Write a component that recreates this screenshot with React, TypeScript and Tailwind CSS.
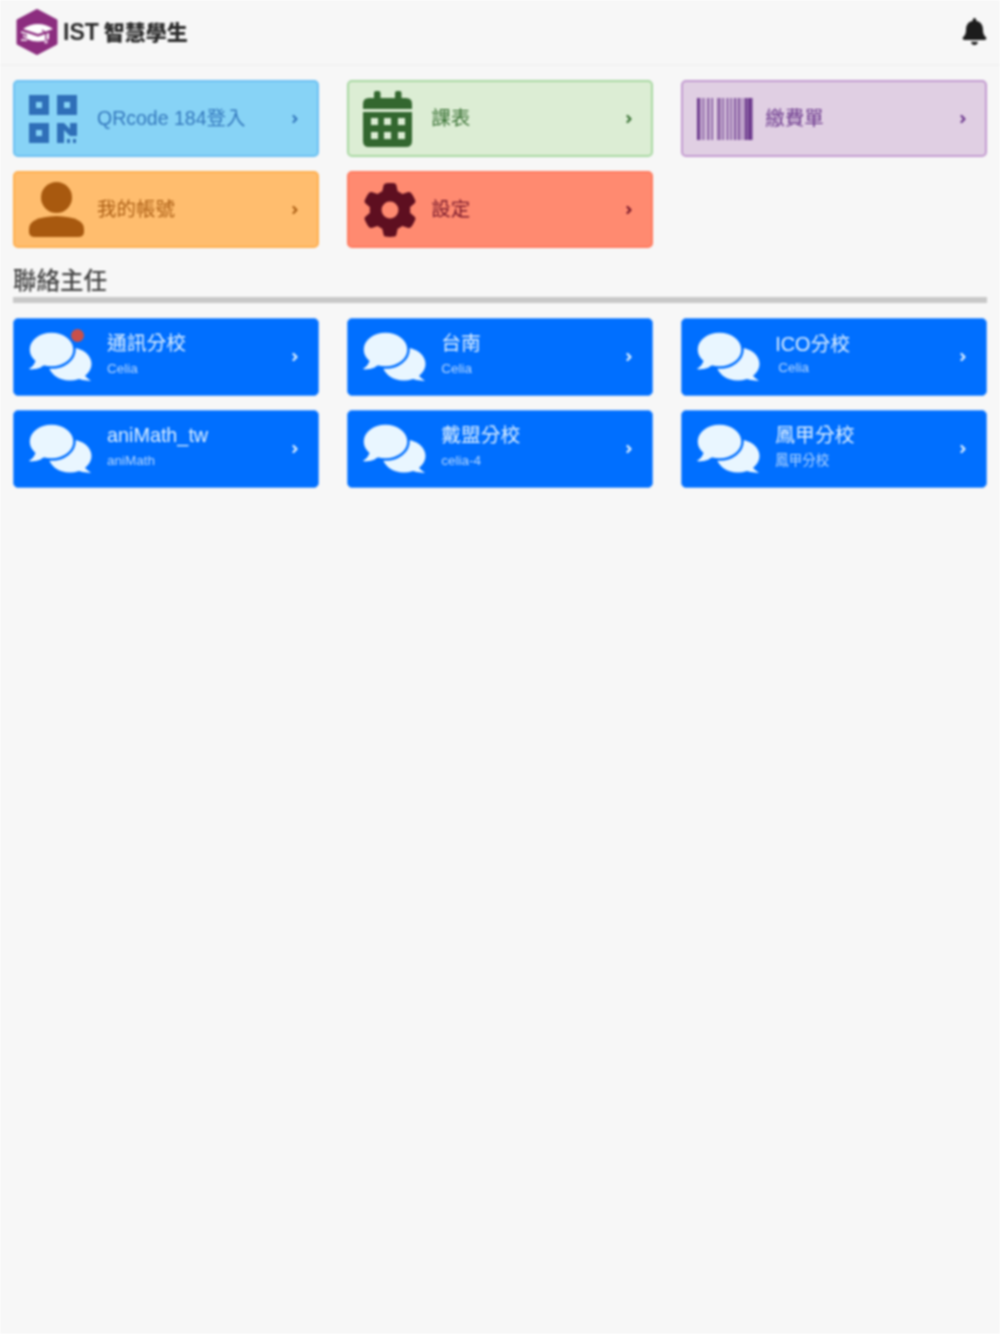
import { FaBell } from 'react-icons/fa'
import { FaGear } from 'react-icons/fa6'
import { ChevronRight } from 'lucide-react'
import type { ReactNode } from 'react'

const font = { fontFamily: '"Liberation Sans", "Noto Sans CJK TC", sans-serif' }

const Logo = () => (
  <svg viewBox="0 0 42 46" className="w-[42px] h-[46px]">
    <path
      d="M21 1.5 L40 11.5 L40 34.5 L21 44.5 L2 34.5 L2 11.5 Z"
      fill="#8c2d7f"
      stroke="#8c2d7f"
      strokeWidth="3"
      strokeLinejoin="round"
    />
    <path d="M7 20 Q14 15 22 15 Q30 15 37 20 L22 25 Z" fill="#fff" />
    <path d="M11 24 L22 27.5 L33 24 L33 30 Q22 35 11 30 Z" fill="#fff" />
    <path d="M5 23 L16 26.5 M7 27 L13 29 M5 31 L11 31" stroke="#fff" strokeWidth="1.4" />
    <path d="M26 21 L30 24 L30 32" stroke="#8c2d7f" strokeWidth="1.4" fill="none" />
    <circle cx="30" cy="33" r="1.8" fill="#e7c6e2" />
  </svg>
)

const QrIcon = () => (
  <svg viewBox="0 0 48 48" className="w-[48px] h-[48px]" fill="#2f6fb8">
    <path fillRule="evenodd" d="M0 0 H20 V20 H0 Z M7 7 V13 H13 V7 Z" />
    <path fillRule="evenodd" d="M28 0 H48 V20 H28 Z M35 7 V13 H41 V7 Z" />
    <path fillRule="evenodd" d="M0 28 H20 V48 H0 Z M7 35 V41 H13 V35 Z" />
    <path d="M28 28 H35 L41 34 V28 H48 V41 H41 L35 35 V48 H28 Z" />
    <rect x="38" y="44" width="3" height="4" />
    <rect x="44" y="44" width="3" height="4" />
  </svg>
)

const CalendarIcon = () => (
  <svg viewBox="0 0 49 56" className="w-[49px] h-[56px]" fill="#33672f">
    <rect x="11" y="0" width="6.5" height="9" rx="2" />
    <rect x="32" y="0" width="6.5" height="9" rx="2" />
    <path d="M0 13 Q0 7 6 7 L43 7 Q49 7 49 13 L49 18 L0 18 Z" />
    <path
      fillRule="evenodd"
      d="M0 21 L49 21 L49 50 Q49 56 43 56 L6 56 Q0 56 0 50 Z M8 27 L8 34 L15 34 L15 27 Z M21 27 L21 34 L28 34 L28 27 Z M35 27 L35 34 L42 34 L42 27 Z M8 41 L8 48 L15 48 L15 41 Z M21 41 L21 48 L28 48 L28 41 Z M35 41 L35 48 L42 48 L42 41 Z"
    />
  </svg>
)

const BarcodeIcon = () => {
  const bars = [
    [0, 3, 1], [4, 1, 0.7], [6, 1.5, 0.8], [10, 2.5, 0.7], [14.5, 1.5, 0.9], [20, 4, 0.65],
    [25.5, 1.5, 0.9], [29.5, 2, 0.8], [33.5, 1.5, 0.9], [37, 2, 0.9], [40.5, 3, 0.75], [45, 1, 0.7], [47.5, 3, 1], [51, 4.5, 1],
  ]
  return (
    <svg viewBox="0 0 56 42" className="w-[56px] h-[42px]" fill="#6d3a8e">
      {bars.map(([x, w, o]) => (
        <rect key={x} x={x} y="0" width={w} height="42" opacity={o} />
      ))}
    </svg>
  )
}

const UserIcon = () => (
  <svg viewBox="0 0 55 56" className="w-[55px] h-[56px]" fill="#a8590f">
    <circle cx="27.5" cy="15.5" r="15.5" />
    <path d="M0 47 Q0 35 27.5 34 Q55 35 55 47 L55 50 Q55 55 49 55 L6 55 Q0 55 0 50 Z" />
  </svg>
)

const ChatIcon = () => (
  <svg viewBox="0 0 64 50" className="w-[64px] h-[50px]" fill="#e9f6ff">
    <ellipse cx="42" cy="32" rx="21.5" ry="16.5" />
    <path d="M54 40 Q58 46 63 49 Q55 49 48 46 Z" />
    <path d="M10 28 Q8 34 1 37 Q10 38 18 33 Z" />
    <ellipse cx="23.5" cy="17.5" rx="23" ry="18" stroke="#006fff" strokeWidth="2.5" />
    <path d="M8 27 Q7 33 1 37 Q10 38 18 32 Z" />
  </svg>
)

const Card = ({
  icon,
  label,
  box,
  text,
}: {
  icon: ReactNode
  label: string
  box: string
  text: string
}) => (
  <div className={`h-[77px] rounded-[5px] border-2 flex items-center pr-[16px] ${box}`}>
    <div className="-ml-[2px] shrink-0 pl-[16px] w-[84px]">{icon}</div>
    <span className={`flex-1 text-[19.5px] leading-none mt-[1px] ${text}`}>{label}</span>
    <ChevronRight className={`size-[12px] ${text}`} strokeWidth={4.5} />
  </div>
)

const ContactCard = ({
  name,
  sub,
  badge,
  subClass = '',
}: {
  name: string
  sub: string
  badge?: boolean
  subClass?: string
}) => (
  <div className="h-[78px] rounded-[5px] bg-[#006fff] border border-[#4d9bff] flex items-center pr-[17px] text-[#dcefff]">
    <div className="relative shrink-0 w-[93px] pl-[14px]">
      <ChatIcon />
      {badge && <span className="absolute left-[57px] -top-[3px] size-[13px] rounded-full bg-[#c9504a]" />}
    </div>
    <div className="flex-1 flex flex-col gap-[5px] -mt-[7px]">
      <span className="text-[19.8px] leading-[26px]">{name}</span>
      <span className={`text-[13.5px] leading-[16px] text-[#b4d7ff] ${subClass}`}>{sub}</span>
    </div>
    <ChevronRight className="size-[12px] text-[#dcefff]" strokeWidth={4.5} />
  </div>
)

const App = () => {
  return (
    <div className="min-h-[1334px] bg-[#f7f7f7] blur-[0.8px]" style={font}>
      <header className="h-[66px] flex items-center justify-between pl-[16px] pr-[12px] border-b-2 border-[#f2f2f2]">
        <div className="flex items-center gap-[5px]">
          <Logo />
          <span className="text-[23px] leading-none font-bold text-[#2b2b2b]">
            IST<span className="text-[21px] font-black ml-[5px]">智慧學生</span>
          </span>
        </div>
        <FaBell className="size-[27px] -mt-[2px] text-[#1c1c1c]" />
      </header>

      <main className="px-[13px] pt-[14px]">
        <div className="grid grid-cols-3 gap-x-[28.5px] gap-y-[14px]">
          <Card
            icon={<QrIcon />}
            label="QRcode 184登入"
            box="bg-[#87d3f6] border-[#6cc1f3]"
            text="text-[#3478bd]"
          />
          <Card
            icon={<CalendarIcon />}
            label="課表"
            box="bg-[#dcedd4] border-[#a8d8a2]"
            text="text-[#3b7336]"
          />
          <Card
            icon={<BarcodeIcon />}
            label="繳費單"
            box="bg-[#e0cfe3] border-[#c39bd0]"
            text="text-[#6d3a8e]"
          />
          <Card
            icon={<UserIcon />}
            label="我的帳號"
            box="bg-[#ffbd6e] border-[#ffb050]"
            text="text-[#ad6118]"
          />
          <Card
            icon={<FaGear className="size-[54px] text-[#5e0f20]" />}
            label="設定"
            box="bg-[#ff8a70] border-[#ff7c60]"
            text="text-[#7a1a2c]"
          />
        </div>

        <h2 className="mt-[18px] text-[23.5px] leading-[30px] font-medium text-[#454545]">聯絡主任</h2>
        <div className="mt-[1px] h-[6px] bg-[#c8c8c8]" />

        <div className="mt-[15px] grid grid-cols-3 gap-x-[28.5px] gap-y-[14px]">
          <ContactCard name="通訊分校" sub="Celia" badge />
          <ContactCard name="台南" sub="Celia" />
          <ContactCard name="ICO分校" sub="Celia" subClass="ml-[3px] -mt-[2px]" />
          <ContactCard name="aniMath_tw" sub="aniMath" />
          <ContactCard name="戴盟分校" sub="celia-4" />
          <ContactCard name="鳳甲分校" sub="鳳甲分校" />
        </div>
      </main>
    </div>
  )
}

export default App
